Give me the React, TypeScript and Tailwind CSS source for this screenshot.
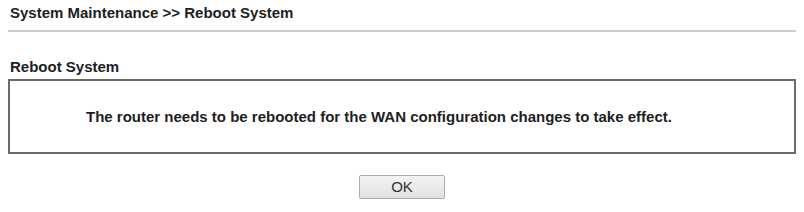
import React from 'react';

const App: React.FC = () => {
  return (
    <div className="w-[804px] h-[212px] bg-white font-['Liberation_Sans',Arial,sans-serif] text-[#1e1e1e] overflow-hidden">
      {/* Page title */}
      <div className="pl-[10px] pt-[4px] text-[15px] font-bold leading-[17px]">
        System Maintenance &gt;&gt; Reboot System
      </div>
      <div className="mx-[8px] mt-[9px] h-[2px] bg-[#cccccc]" />

      {/* Section */}
      <div className="pl-[10px] mt-[26px] text-[15px] font-bold leading-[17px]">Reboot System</div>
      <div className="mx-[8px] mt-[4px] h-[75px] border-2 border-[#6a6a6a] flex items-center pl-[76px]">
        <p className="text-[15px] font-bold leading-[17px]">
          The router needs to be rebooted for the WAN configuration changes to take effect.
        </p>
      </div>

      {/* Action */}
      <div className="flex justify-center mt-[21px]">
        <button
          type="button"
          className="w-[86px] h-[24px] border border-[#adadad] rounded-[2px] bg-gradient-to-b from-[#f4f4f4] to-[#e1e1e1] text-[15px] leading-[18px] text-[#333]"
        >
          OK
        </button>
      </div>
    </div>
  );
};

export default App;
